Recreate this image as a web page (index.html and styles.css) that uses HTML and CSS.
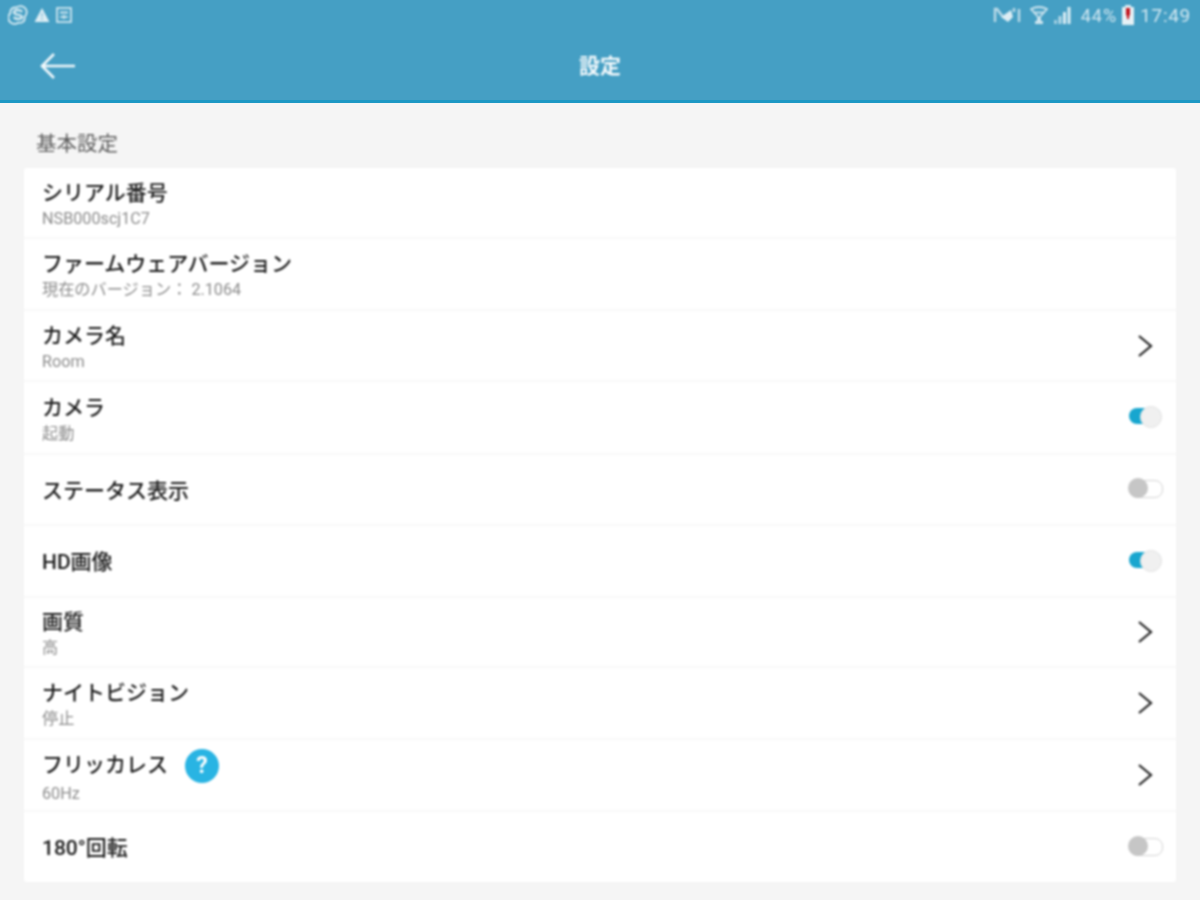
FILE: index.html
```html
<!DOCTYPE html>
<html lang="ja">
<head>
<meta charset="utf-8">
<title>設定</title>
<link rel="stylesheet" href="styles.css">
</head>
<body>
<div class="page">
  <header class="header">
    <div class="status">
      <div class="status-left">
        <svg class="si" width="20" height="20" viewBox="0 0 20 20"><g fill="none" stroke="#dcedf4"><path stroke-width="1.800" d="M7 2.500a4.500 4.500 0 0 0-4.500 5.500 6 6 0 0 0 8 9.500 4.500 4.500 0 0 0 6-5.500 6 6 0 0 0-8-9.500z"/><path stroke-width="2.200" d="M14 7c-1-2.500-8-2.500-8 .5 0 3 8 1.500 8 4.500 0 2.500-7 2.500-8 0"/></g></svg>
        <svg class="si" width="16" height="16" viewBox="0 0 16 16"><path d="M8 1 15.500 15H.5z" fill="#dcedf4"/><rect x="7" y="6" width="2" height="4" fill="#a6d0e3"/><rect x="7" y="11" width="2" height="2" fill="#a6d0e3"/></svg>
        <svg class="si" width="16" height="16" viewBox="0 0 16 16"><rect x="1" y="1" width="14" height="14" fill="none" stroke="#dcedf4" stroke-width="1.600"/><rect x="4" y="4" width="8" height="3" fill="#a6d0e3"/><path d="M4 10h8M8 8v4" stroke="#dcedf4" stroke-width="1.500"/></svg>
      </div>
      <div class="status-right">
        <svg class="nfc" width="28" height="16" viewBox="0 0 28 16"><g fill="none" stroke="#bcdbe8" stroke-width="2.400"><path d="M2 15V2h2l6 8"/><path d="M26 2v13"/><path d="M21 1v4"/></g><path d="M8 10 18 3l2 7-5 5z" fill="#dcedf4"/></svg>
        <svg class="wifi" width="18" height="19" viewBox="0 0 18 19"><g fill="none" stroke="#cfe5ef" stroke-width="1.800"><path d="M1 3c5-2.500 11-2.500 16 0l-8 9z"/><path d="M4 6.500h10"/></g><rect x="7" y="12" width="4" height="3" fill="#cfe5ef"/><rect x="5" y="15" width="8" height="3" fill="#cfe5ef"/></svg>
        <svg class="signal" width="18" height="18" viewBox="0 0 18 18"><g fill="#dcedf4"><rect x="1" y="14" width="3" height="4" opacity=".6"/><rect x="5.500" y="10" width="3" height="8" opacity=".75"/><rect x="10" y="6" width="3" height="12"/><rect x="14.500" y="1" width="3" height="17"/></g></svg>
        <span class="pct">44%</span>
        <svg class="batt" width="14" height="20" viewBox="0 0 14 20"><rect x="4" y="0" width="6" height="2" fill="#dcedf4"/><rect x="1" y="2" width="12" height="18" fill="#e6f1f6"/><path d="M5 3h4v7l-1 1v3H6v-3l-1-1z" fill="#c3141c"/></svg>
        <span class="time">17:49</span>
      </div>
    </div>
    <div class="appbar">
      <svg class="back" width="36" height="28" viewBox="0 0 36 28"><path d="M35 14H3M14 2 2 14l12 12" fill="none" stroke="#f1f8fb" stroke-width="2.600"/></svg>
      <h1 class="title">設定</h1>
    </div>
  </header>
  <main class="content">
    <h2 class="section">基本設定</h2>
    <ul class="list">
      <li class="row r71"><div class="text"><div class="label">シリアル番号</div><div class="sub">NSB000scj1C7</div></div></li>
      <li class="row r72"><div class="text"><div class="label">ファームウェアバージョン</div><div class="sub">現在のバージョン： 2.1064</div></div></li>
      <li class="row r71"><div class="text"><div class="label">カメラ名</div><div class="sub">Room</div></div>
        <svg class="chev" width="16" height="24" viewBox="0 0 16 24"><path d="M2 2l12 10L2 22" fill="none" stroke="#222" stroke-width="2.200"/></svg></li>
      <li class="row r73"><div class="text"><div class="label">カメラ</div><div class="sub">起動</div></div>
        <span class="toggle on"></span></li>
      <li class="row r71"><div class="text"><div class="label">ステータス表示</div></div>
        <span class="toggle off"></span></li>
      <li class="row r72"><div class="text"><div class="label">HD画像</div></div>
        <span class="toggle on"></span></li>
      <li class="row r70"><div class="text"><div class="label">画質</div><div class="sub">高</div></div>
        <svg class="chev" width="16" height="24" viewBox="0 0 16 24"><path d="M2 2l12 10L2 22" fill="none" stroke="#222" stroke-width="2.200"/></svg></li>
      <li class="row r72"><div class="text"><div class="label">ナイトビジョン</div><div class="sub">停止</div></div>
        <svg class="chev" width="16" height="24" viewBox="0 0 16 24"><path d="M2 2l12 10L2 22" fill="none" stroke="#222" stroke-width="2.200"/></svg></li>
      <li class="row r72"><div class="text"><div class="label">フリッカレス<span class="help">?</span></div><div class="sub">60Hz</div></div>
        <svg class="chev" width="16" height="24" viewBox="0 0 16 24"><path d="M2 2l12 10L2 22" fill="none" stroke="#222" stroke-width="2.200"/></svg></li>
      <li class="row r70 last"><div class="text"><div class="label">180°回転</div></div>
        <span class="toggle off"></span></li>
    </ul>
  </main>
</div>
</body>
</html>
```
FILE: styles.css
```css
* { box-sizing: border-box; }
html, body { margin: 0; height: 100%; }
body {
  background: #f5f5f5;
  font-family: "Roboto", "Noto Sans CJK JP", sans-serif;
  color: #222;
  overflow: hidden;
}
.page { width: 1200px; height: 900px; background: #f5f5f5; }
.status, .appbar, .section, .list { filter: blur(0.8px); }
.header {
  height: 103px;
  background: #459fc4;
  border-bottom: 3px solid #1d98c4;
}
.status {
  height: 30px;
  display: flex;
  justify-content: space-between;
  align-items: center;
  padding: 0 9px 0 8px;
}
.status-left { display: flex; align-items: center; gap: 6px; }
.status-right { display: flex; align-items: center; color: #d3e8f1; }
.si { display: block; }
.nfc { margin-right: 9px; }
.wifi { margin-right: 5px; }
.signal { margin-right: 10px; }
.pct { font-size: 18px; letter-spacing: 1px; margin-right: 4px; }
.batt { margin-right: 5px; }
.time { font-size: 19px; letter-spacing: 0.700px; }
.appbar {
  height: 70px;
  position: relative;
  display: flex;
  align-items: center;
  justify-content: center;
  padding-top: 2px;
}
.back { position: absolute; left: 40px; top: 22px; }
.title { margin: 0; font-size: 21px; font-weight: 700; color: #f2f8fb; line-height: 1; }
.content { padding: 0 24px; }
.section {
  margin: 0;
  height: 65px;
  padding: 28px 0 0 12px;
  font-size: 20.500px;
  font-weight: 400;
  line-height: 26px;
  color: #5e5e5e;
}
.list { list-style: none; margin: 0; padding: 0; background: #fff; border-radius: 3px; }
.row {
  display: flex;
  align-items: center;
  justify-content: space-between;
  padding: 0 23px 0 18px;
  border-bottom: 2px solid #f8f8f8;
}
.row.last { border-bottom: 0; }
.r70 { height: 70px; }
.r71 { height: 71px; }
.r72 { height: 72px; }
.r73 { height: 73px; }
.text { display: flex; flex-direction: column; padding-top: 2px; }
.label {
  font-size: 21px;
  font-weight: 500;
  line-height: 26px;
  color: #1c1c1c;
  display: flex;
  align-items: center;
}
.sub {
  font-size: 16.200px;
  line-height: 18px;
  margin-top: 4px;
  color: #8c8c8c;
}
.help {
  width: 34px;
  height: 34px;
  margin-left: 17px;
  border-radius: 50%;
  background: #29b4e3;
  color: #fff;
  font-size: 23px;
  font-weight: 700;
  display: flex;
  align-items: center;
  justify-content: center;
  margin-top: -1px;
  margin-bottom: -2px;
}
.chev { display: block; }
.toggle {
  position: relative;
  width: 34px;
  height: 20px;
  display: block;
  margin-right: -9px;
  margin-top: -3px;
}
.toggle::before {
  content: "";
  position: absolute;
  left: 1px;
  top: 2px;
  width: 32px;
  height: 16px;
  border-radius: 8px;
}
.toggle::after {
  content: "";
  position: absolute;
  top: 0;
  width: 20px;
  height: 20px;
  border-radius: 50%;
}
.toggle.on::before { background: #17a6cf; }
.toggle.on::after { right: 0; background: #f0f0f0; border: 1px solid #e4e4e4; }
.toggle.off::before { background: #fff; border: 1px solid #d4d4d4; }
.toggle.off::after { left: 0; background: #c6c6c6; }
```
